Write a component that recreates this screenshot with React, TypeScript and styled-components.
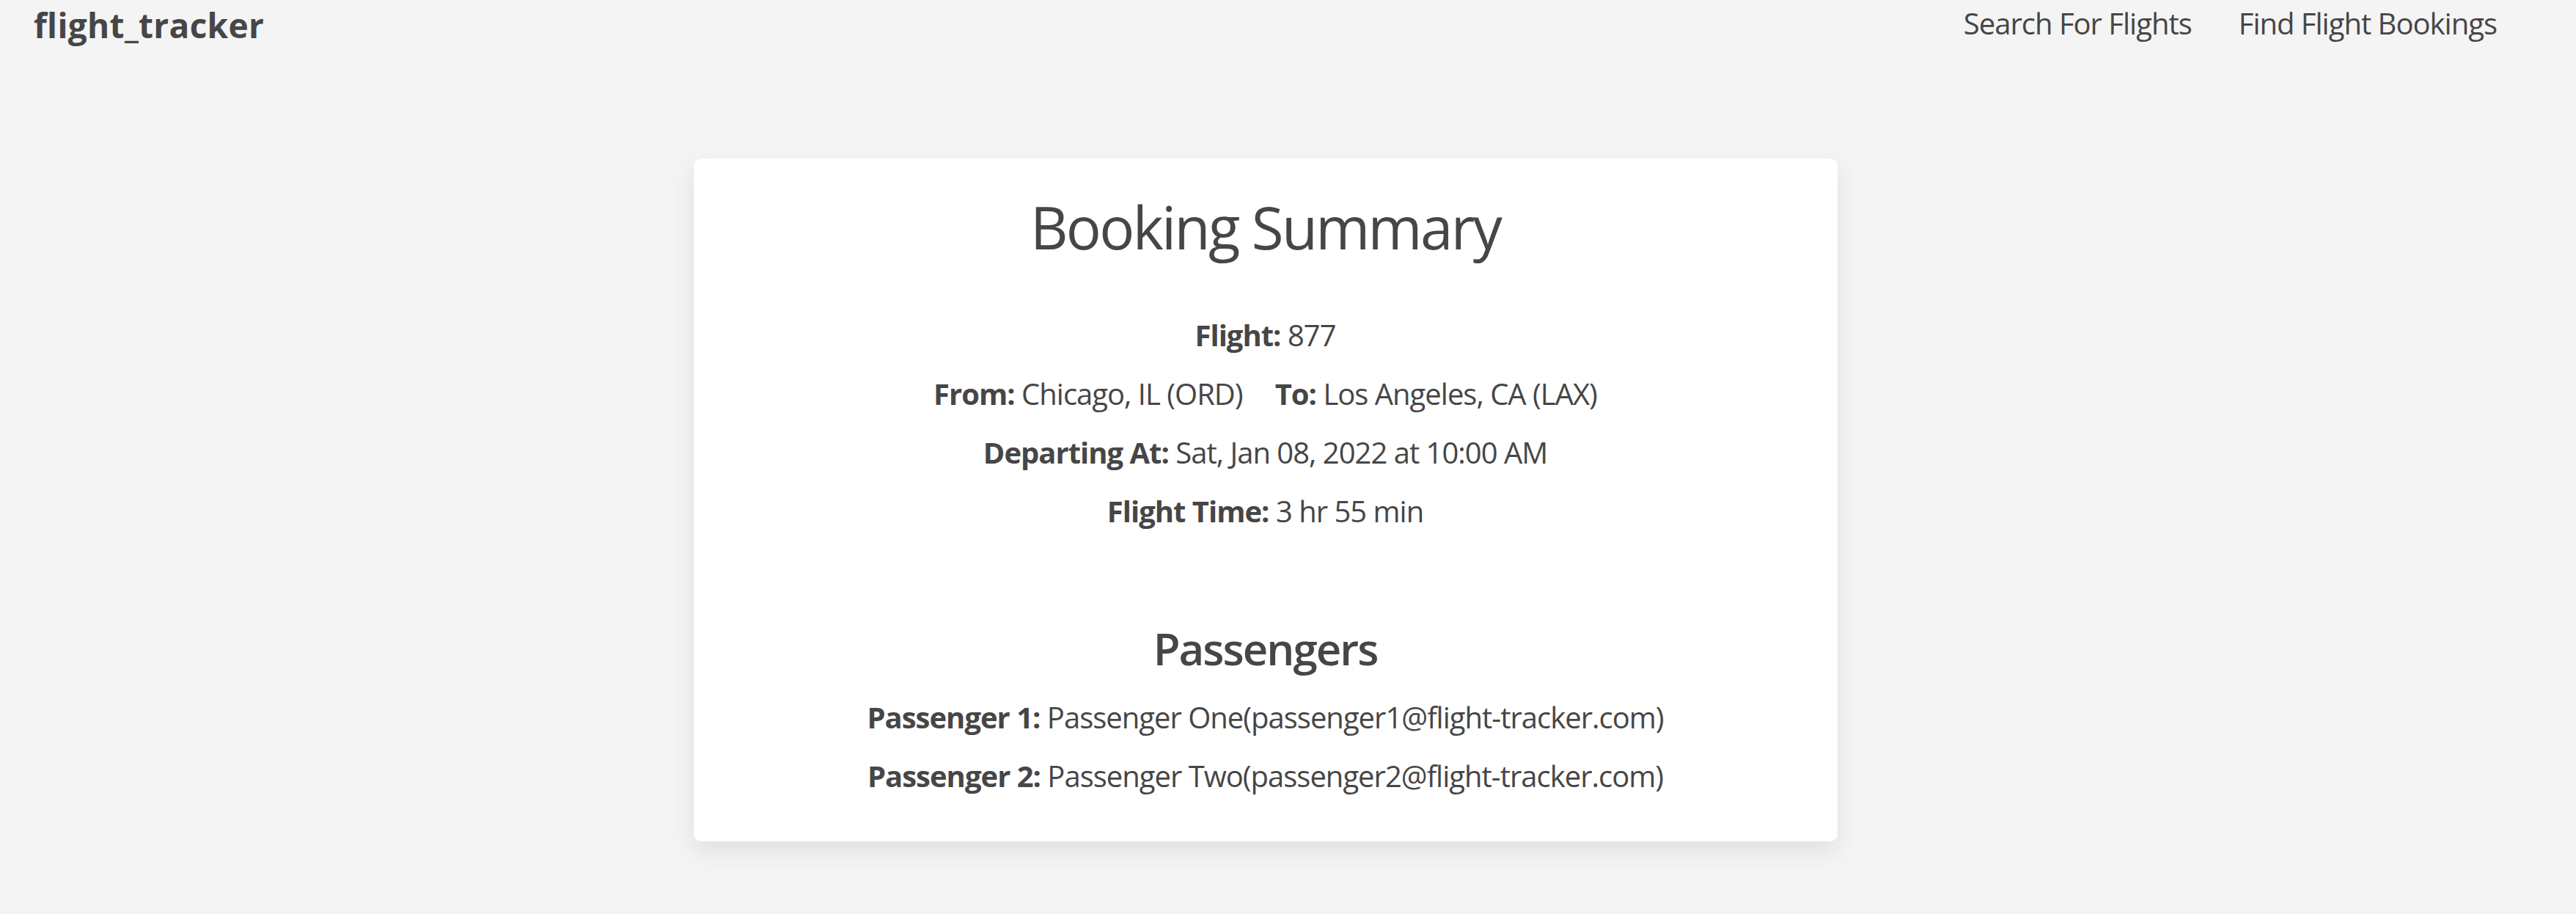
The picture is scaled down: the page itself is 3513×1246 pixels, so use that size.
import React from "react";
import styled, { createGlobalStyle } from "styled-components";

const GlobalStyle = createGlobalStyle`
  html, body {
    margin: 0;
    padding: 0;
    background: #f4f4f4;
  }
  body {
    font-family: "Open Sans", "Noto Sans", sans-serif;
    color: #464646;
  }
  * { box-sizing: border-box; }
`;

const Page = styled.div`
  min-height: 1246px;
  background: #f4f4f4;
`;

const Header = styled.header`
  display: flex;
  justify-content: space-between;
  align-items: flex-start;
  padding: 0 108px 0 46px;
  height: 60px;
`;

const Logo = styled.a`
  font-size: 46px;
  line-height: 56px;
  font-weight: 700;
  color: #464646;
  text-decoration: none;
  padding-top: 6px;
  letter-spacing: 0.3px;
`;

const Nav = styled.nav`
  display: flex;
  gap: 64px;
  padding-top: 4px;
`;

const NavLink = styled.a`
  font-size: 40px;
  line-height: 56px;
  color: #464646;
  text-decoration: none;
  letter-spacing: -1px;
`;

const Main = styled.main`
  display: flex;
  justify-content: center;
  padding: 156px 62px 0 0;
`;

const Card = styled.section`
  width: 1560px;
  background: #ffffff;
  border-radius: 10px;
  box-shadow: 0 12px 32px rgba(0, 0, 0, 0.09);
  padding: 45px 20px 49px;
  text-align: center;
`;

const Title = styled.h1`
  margin: 0;
  font-size: 80px;
  line-height: 96px;
  font-weight: 400;
  letter-spacing: -2.7px;
`;

const Details = styled.div`
  margin-top: 60px;
`;

const Row = styled.p`
  margin: 0;
  font-size: 40px;
  line-height: 80px;
  letter-spacing: -1px;
`;

const Label = styled.strong`
  font-weight: 700;
`;

const Pair = styled.span<{ $gap?: number }>`
  margin-left: ${(p) => p.$gap ?? 0}px;
`;

const SubTitle = styled.h2`
  margin: 111px 0 0;
  font-size: 60px;
  line-height: 72px;
  font-weight: 600;
  letter-spacing: -2px;
`;

const PassengerList = styled.div`
  margin-top: 18px;
`;

const passengers = [
  { n: 1, name: "Passenger One", email: "passenger1@flight-tracker.com" },
  { n: 2, name: "Passenger Two", email: "passenger2@flight-tracker.com" },
];

export default function App() {
  return (
    <Page>
      <GlobalStyle />
      <Header>
        <Logo href="#">flight_tracker</Logo>
        <Nav>
          <NavLink href="#">Search For Flights</NavLink>
          <NavLink href="#">Find Flight Bookings</NavLink>
        </Nav>
      </Header>
      <Main>
        <Card>
          <Title>Booking Summary</Title>
          <Details>
            <Row>
              <Label>Flight:</Label> 877
            </Row>
            <Row>
              <Pair>
                <Label>From:</Label> Chicago, IL (ORD)
              </Pair>
              <Pair $gap={44}>
                <Label>To:</Label> Los Angeles, CA (LAX)
              </Pair>
            </Row>
            <Row>
              <Label>Departing At:</Label> Sat, Jan 08, 2022 at 10:00 AM
            </Row>
            <Row>
              <Label>Flight Time:</Label> 3 hr 55 min
            </Row>
          </Details>
          <SubTitle>Passengers</SubTitle>
          <PassengerList>
            {passengers.map((p) => (
              <Row key={p.n}>
                <Label>Passenger {p.n}:</Label> {p.name}({p.email})
              </Row>
            ))}
          </PassengerList>
        </Card>
      </Main>
    </Page>
  );
}
